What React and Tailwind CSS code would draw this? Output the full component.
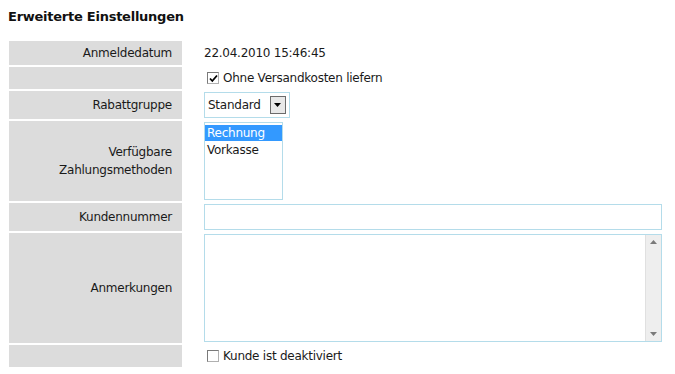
export default function App() {
  const font = { fontFamily: '"DejaVu Sans", Verdana, sans-serif' };
  const Label = ({ h, children }) => (
    <div className="w-[173px] bg-[#dcdcdc] flex items-center justify-end pr-[10px] text-right text-[12px] leading-[18px] text-[#1a1a1a]" style={{ height: h }}>
      {children}
    </div>
  );
  const Check = ({ checked }) => (
    <div className="w-[12px] h-[12px] border border-[#7a7a7a] border-r-[#b0b0b0] border-b-[#b0b0b0] bg-white flex items-center justify-center">
      {checked && (
        <svg width="9" height="9" viewBox="0 0 9 9">
          <path d="M1 4.5 L3.3 7 L8 1.5" stroke="#000" strokeWidth="1.8" fill="none" />
        </svg>
      )}
    </div>
  );
  return (
    <div className="w-[675px] h-[374px] bg-white text-[#1a1a1a] tracking-[-0.25px]" style={font}>
      <div className="pl-[8px] pt-[9px] text-[13px] font-bold leading-[16px] text-[#111]">Erweiterte Einstellungen</div>
      <div className="ml-[9px] mt-[16px] flex flex-col gap-[2px] text-[12px]">
        <div className="flex gap-[22px]">
          <Label h={24}>Anmeldedatum</Label>
          <div className="flex items-center">22.04.2010 15:46:45</div>
        </div>
        <div className="flex gap-[22px]">
          <Label h={22}></Label>
          <div className="flex items-center gap-[4px] pl-[3px]">
            <Check checked />
            <span>Ohne Versandkosten liefern</span>
          </div>
        </div>
        <div className="flex gap-[22px]">
          <Label h={28}>Rabattgruppe</Label>
          <div className="flex items-center">
            <div className="w-[86px] h-[26px] border border-[#b4dcea] flex items-center justify-between pl-[3px] pr-[3px]">
              <span>Standard</span>
              <div className="w-[16px] h-[18px] border border-[#6b6b6b] bg-[#e8e8e8] flex items-center justify-center">
                <svg width="8" height="5" viewBox="0 0 8 5"><path d="M0 0 H7 L3.5 4 Z" fill="#000" /></svg>
              </div>
            </div>
          </div>
        </div>
        <div className="flex gap-[22px]">
          <Label h={80}><span className="leading-[18px]">Verfügbare<br />Zahlungsmethoden</span></Label>
          <div className="pt-[1px]">
            <div className="w-[79px] h-[78px] border border-[#b4dcea] flex flex-col">
              <div className="bg-[#3399ff] text-white pl-[2px] leading-[16px] mt-[2px]">Rechnung</div>
              <div className="pl-[2px] leading-[18px]">Vorkasse</div>
            </div>
          </div>
        </div>
        <div className="flex gap-[22px]">
          <Label h={28}>Kundennummer</Label>
          <div className="pt-[1px]">
            <div className="w-[458px] h-[26px] border border-[#b4dcea]"></div>
          </div>
        </div>
        <div className="flex gap-[22px]">
          <Label h={110}>Anmerkungen</Label>
          <div className="pt-[1px]">
            <div className="w-[458px] h-[108px] border border-[#b4dcea] flex justify-end">
              <div className="w-[16px] h-full bg-[#eeeeee] border-l border-[#e0e0e0] flex flex-col items-center justify-between py-[5px]">
                <svg width="7" height="4" viewBox="0 0 7 4"><path d="M0 4 L3.5 0 L7 4 Z" fill="#7a7a7a" /></svg>
                <svg width="7" height="4" viewBox="0 0 7 4"><path d="M0 0 L3.5 4 L7 0 Z" fill="#7a7a7a" /></svg>
              </div>
            </div>
          </div>
        </div>
        <div className="flex gap-[22px]">
          <Label h={22}></Label>
          <div className="flex items-center gap-[4px] pl-[3px]">
            <Check />
            <span>Kunde ist deaktiviert</span>
          </div>
        </div>
      </div>
    </div>
  );
}
